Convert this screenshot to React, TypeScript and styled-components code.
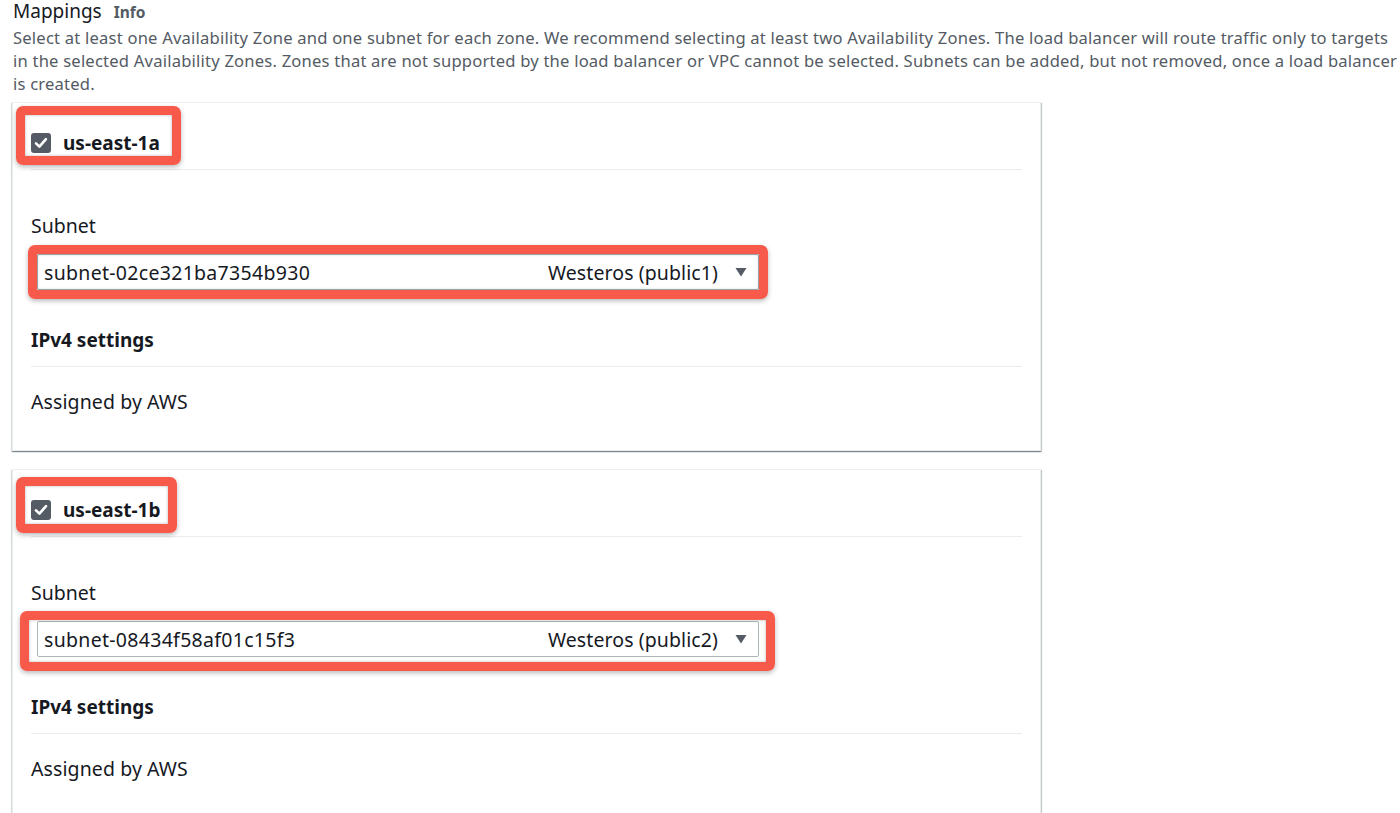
import React from "react";
import styled, { createGlobalStyle } from "styled-components";

const GlobalStyle = createGlobalStyle`
  html, body { margin: 0; padding: 0; background: #ffffff; }
  body { font-family: "Noto Sans", "Open Sans", sans-serif; color: #16191f; }
  * { box-sizing: border-box; }
`;

const Page = styled.div`
  width: 1400px;
  height: 813px;
  overflow: hidden;
  padding: 0 0 0 12px;
`;

const TitleRow = styled.div`
  display: flex;
  align-items: baseline;
  gap: 12px;
  padding: 0 0 0 1px;
  height: 24px;
  line-height: 22px;
`;

const Title = styled.h2`
  margin: 0;
  font-size: 19px;
  font-weight: 400;
  color: #16191f;
`;

const InfoLink = styled.span`
  font-size: 15.5px;
  font-weight: 700;
  color: #545b64;
`;

const Description = styled.p`
  margin: 2px 0 7px 1px;
  width: 1388px;
  font-size: 16.6px;
  letter-spacing: 0.2px;
  line-height: 23px;
  color: #545b64;
`;

const Cards = styled.div`
  display: flex;
  flex-direction: column;
  gap: 18px;
`;

const Card = styled.section`
  width: 1029px;
  background: #ffffff;
  border: 1px solid #eaeded;
  border-top-color: #eef0f0;
  box-shadow: 0 1px 1px 0 rgba(0, 28, 36, 0.35), 1px 1px 1px 0 rgba(0, 28, 36, 0.18),
    -1px 1px 1px 0 rgba(0, 28, 36, 0.1);
  padding: 0 18px;
`;

const CardHeader = styled.div`
  display: flex;
  padding: 29px 0 15px;
  border-bottom: 1px solid #eaeded;
`;

const Highlight = styled.span<{ $inset: string }>`
  position: relative;
  display: inline-flex;
  align-items: center;
  &::before {
    content: "";
    position: absolute;
    inset: ${(p) => p.$inset};
    border: 9px solid #f75a4b;
    border-radius: 7px;
    box-shadow: 0 2px 5px rgba(0, 0, 0, 0.28), inset 0 0 3px rgba(0, 0, 0, 0.3);
    pointer-events: none;
  }
`;

const CheckLabel = styled.label`
  display: inline-flex;
  align-items: center;
  gap: 12px;
  height: 22px;
  font-size: 19px;
  font-weight: 700;
  color: #16191f;
`;

const CheckBox = styled.span`
  width: 20px;
  height: 20px;
  border-radius: 3px;
  background: #545b64;
  display: inline-flex;
  align-items: center;
  justify-content: center;
`;

const CardBody = styled.div`
  display: flex;
  flex-direction: column;
  padding: 45px 0 37px;
`;

const FieldLabel = styled.div`
  font-size: 19.5px;
  line-height: 22px;
  color: #16191f;
  margin-bottom: 17px;
`;

const SelectRow = styled.div`
  display: flex;
  margin-left: 6px;
`;

const SelectBox = styled.div`
  width: 722px;
  height: 36px;
  display: flex;
  align-items: center;
  padding: 0 10px 0 6px;
  border: 1px solid #aab7b8;
  border-radius: 2px;
  background: #ffffff;
  font-size: 19.5px;
  letter-spacing: 0.3px;
  color: #16191f;
`;

const SelectValue = styled.span`
  flex: 1;
`;

const SelectTag = styled.span`
  margin-right: 16px;
  letter-spacing: 0.1px;
`;

const SectionTitle = styled.div`
  margin-top: 39px;
  font-size: 19px;
  line-height: 22px;
  font-weight: 700;
  padding-bottom: 15px;
  border-bottom: 1px solid #eaeded;
`;

const SectionValue = styled.div`
  margin-top: 24px;
  font-size: 19.5px;
  letter-spacing: 0.1px;
  line-height: 22px;
`;

const Check = () => (
  <svg width="16" height="16" viewBox="0 0 16 16">
    <path d="M3 8.4 L6.4 11.6 L13 4.2" fill="none" stroke="#ffffff" strokeWidth="2.6" strokeLinecap="round" strokeLinejoin="round" />
  </svg>
);

const Caret = () => (
  <svg width="14" height="10" viewBox="0 0 14 10">
    <path d="M1.5 1 L12.5 1 L7 9.5 Z" fill="#545b64" />
  </svg>
);

type Zone = {
  name: string;
  subnet: string;
  tag: string;
  headInset: string;
  selectInset: string;
};

const zones: Zone[] = [
  {
    name: "us-east-1a",
    subnet: "subnet-02ce321ba7354b930",
    tag: "Westeros (public1)",
    headInset: "-26px -21px -11px -15px",
    selectInset: "-9px -9px -9px -9px",
  },
  {
    name: "us-east-1b",
    subnet: "subnet-08434f58af01c15f3",
    tag: "Westeros (public2)",
    headInset: "-22px -17px -12px -15px",
    selectInset: "-10px -16px -14px -17px",
  },
];

export default function App() {
  return (
    <Page>
      <GlobalStyle />
      <TitleRow>
        <Title>Mappings</Title>
        <InfoLink>Info</InfoLink>
      </TitleRow>
      <Description>
        Select at least one Availability Zone and one subnet for each zone. We recommend selecting at least two
        Availability Zones. The load balancer will route traffic only to targets in the selected Availability Zones.
        Zones that are not supported by the load balancer or VPC cannot be selected. Subnets can be added, but not
        removed, once a load balancer is created.
      </Description>
      <Cards>
        {zones.map((z) => (
          <Card key={z.name}>
            <CardHeader>
              <Highlight $inset={z.headInset}>
                <CheckLabel>
                  <CheckBox>
                    <Check />
                  </CheckBox>
                  {z.name}
                </CheckLabel>
              </Highlight>
            </CardHeader>
            <CardBody>
              <FieldLabel>Subnet</FieldLabel>
              <SelectRow>
                <Highlight $inset={z.selectInset}>
                  <SelectBox>
                    <SelectValue>{z.subnet}</SelectValue>
                    <SelectTag>{z.tag}</SelectTag>
                    <Caret />
                  </SelectBox>
                </Highlight>
              </SelectRow>
              <SectionTitle>IPv4 settings</SectionTitle>
              <SectionValue>Assigned by AWS</SectionValue>
            </CardBody>
          </Card>
        ))}
      </Cards>
    </Page>
  );
}
